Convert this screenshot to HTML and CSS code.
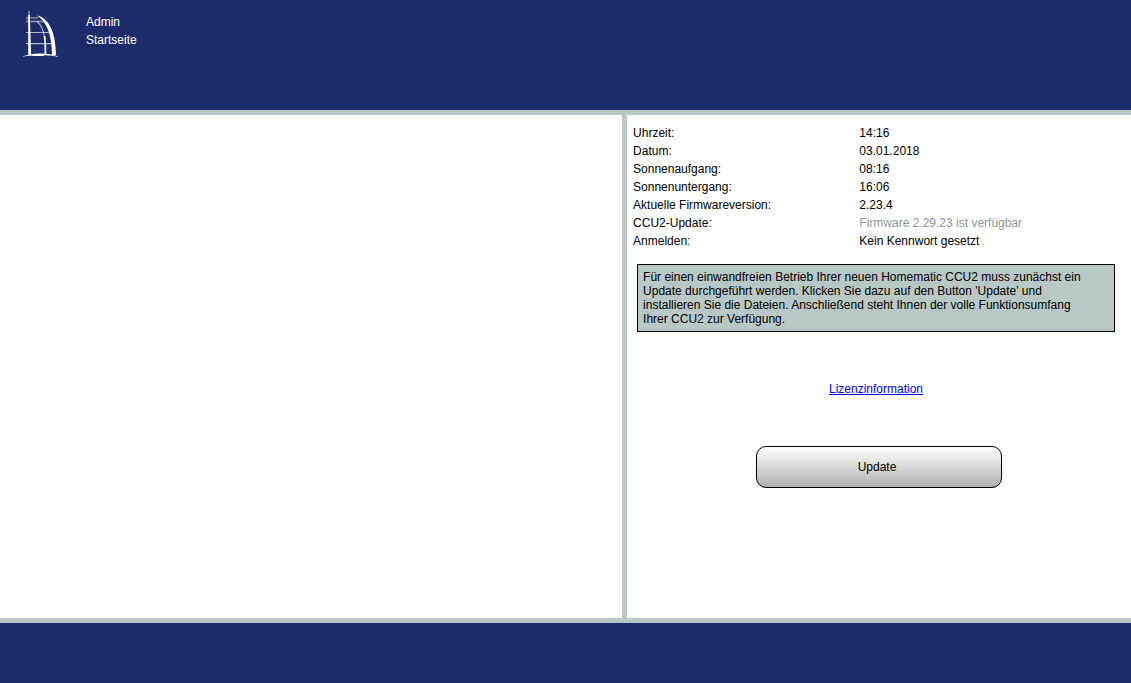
FILE: index.html
```html
<!DOCTYPE html>
<html lang="de">
<head>
<meta charset="utf-8">
<title>Startseite</title>
<link rel="stylesheet" href="styles.css">
</head>
<body>
<header class="header">
  <svg class="logo" viewBox="0 0 40 52" aria-hidden="true">
    <g fill="none" stroke="#fff">
      <path d="M9 3V12" stroke-width="1.4" opacity=".55"/>
      <path d="M6 10.300Q12 9.500 18 9.700M6 13.500H24" stroke-width="1.400" opacity=".5"/>
      <path d="M6 24.500H31M6 35.600H33" stroke-width="1.200" opacity=".65"/>
      <path d="M17 13.500Q23 18 25 32" stroke-width="1.200" opacity=".6"/>
      <path d="M24.600 28Q25.600 36 25.400 46" stroke-width="1.800" opacity=".9"/>
    </g>
    <path d="M8.200 7H9.800L11.200 47H8.200Z" fill="#fff"/>
    <path d="M17 7.600C28 10 35.500 22 36 47H32C31.800 27 27 14 17 7.600Z" fill="#fff"/>
    <path d="M2 48.700Q8 45.800 20 45.400Q33 45.600 39 48.800Q32 47.200 25 47.200Q23 48.400 16 48Q8 47.400 2 48.700Z" fill="#fff"/>
  </svg>
  <div class="crumbs">
    <div>Admin</div>
    <div>Startseite</div>
  </div>
</header>
<main class="content">
  <section class="left"></section>
  <section class="right">
    <table class="info">
      <tr><th scope="row">Uhrzeit:</th><td>14:16</td></tr>
      <tr><th scope="row">Datum:</th><td>03.01.2018</td></tr>
      <tr><th scope="row">Sonnenaufgang:</th><td>08:16</td></tr>
      <tr><th scope="row">Sonnenuntergang:</th><td>16:06</td></tr>
      <tr><th scope="row">Aktuelle Firmwareversion:</th><td>2.23.4</td></tr>
      <tr><th scope="row">CCU2-Update:</th><td class="hint">Firmware 2.29.23 ist verfügbar</td></tr>
      <tr><th scope="row">Anmelden:</th><td>Kein Kennwort gesetzt</td></tr>
    </table>
    <p class="note">Für einen einwandfreien Betrieb Ihrer neuen Homematic CCU2 muss zunächst ein Update durchgeführt werden. Klicken Sie dazu auf den Button 'Update' und installieren Sie die Dateien. Anschließend steht Ihnen der volle Funktionsumfang Ihrer CCU2 zur Verfügung.</p>
    <p class="license"><a href="#">Lizenzinformation</a></p>
    <button class="update" type="button">Update</button>
  </section>
</main>
<footer class="footer"></footer>
</body>
</html>
```
FILE: styles.css
```css
* {
  box-sizing: border-box;
}

body {
  margin: 0;
  min-height: 100vh;
  display: flex;
  flex-direction: column;
  background: #fefffd;
  color: #000;
  font: 12px/14px "Liberation Sans", Arial, sans-serif;
}

.header {
  display: flex;
  align-items: flex-start;
  gap: 26px;
  min-height: 115px;
  padding: 8px 20px;
  background: #1e2b6b;
  border-bottom: 5px solid #b9c7c6;
  color: #fff;
}

.logo {
  width: 40px;
  height: 52px;
}

.crumbs {
  padding-top: 5px;
  line-height: 18px;
}

.content {
  flex: 1;
  display: flex;
}

.left {
  flex: 0 0 55%;
}

.right {
  flex: 1;
  display: flex;
  flex-direction: column;
  padding-top: 9px;
  border-left: 5px solid #b9c7c6;
}

.info {
  margin: 0 6px;
  border-collapse: collapse;
  table-layout: fixed;
  line-height: 18px;
}

.info th,
.info td {
  padding: 0;
  text-align: left;
  font-weight: normal;
}

.info th {
  width: 46%;
}

.info .hint {
  color: #8b989e;
}

.note {
  margin: 14px 16px 0 10px;
  padding: 5px 20px 5px 5px;
  background: #b9c7c6;
  border: 1px solid #000;
}

.license {
  margin: 50px 16px 50px 10px;
  text-align: center;
}

.license a {
  color: #00e;
}

.update {
  align-self: center;
  width: 246px;
  height: 42px;
  padding: 0 4px 0 0;
  border: 1px solid #000;
  border-radius: 10px;
  background: linear-gradient(#fefffd, #b0b2af);
  color: #000;
  font: inherit;
}

.footer {
  height: 65px;
  background: #1e2b6b;
  border-top: 5px solid #b9c7c6;
}
```
